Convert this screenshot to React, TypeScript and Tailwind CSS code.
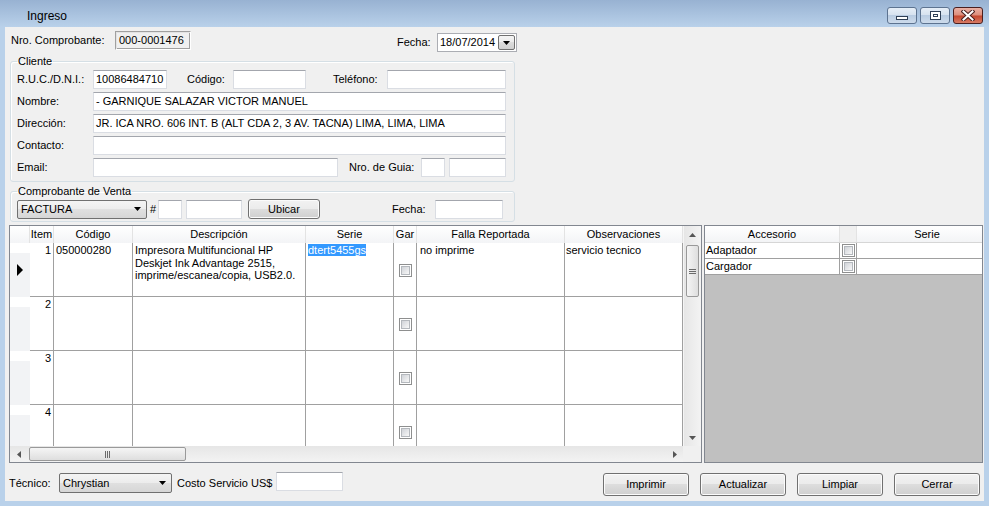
import React from "react";

const F = "font-['Liberation_Sans',Arial,sans-serif] text-[11px] leading-[13px] text-black";

function TextBox({ className = "", children }: { className?: string; children?: React.ReactNode }) {
  return (
    <div
      className={`h-[19px] shrink-0 bg-white border border-[#dadde3] border-t-[#a3a6ad] flex items-center px-[2px] overflow-hidden whitespace-nowrap ${className}`}
    >
      {children}
    </div>
  );
}

function Label({ className = "", children }: { className?: string; children?: React.ReactNode }) {
  return <div className={`shrink-0 whitespace-nowrap flex items-center ${className}`}>{children}</div>;
}

function Arrow({ dir = "down", color = "#000" }: { dir?: "down" | "up" | "left" | "right"; color?: string }) {
  if (dir === "down")
    return (
      <svg width="7" height="4" viewBox="0 0 7 4">
        <path d="M0 0h7L3.5 4z" fill={color} />
      </svg>
    );
  if (dir === "up")
    return (
      <svg width="7" height="4" viewBox="0 0 7 4">
        <path d="M0 4h7L3.5 0z" fill={color} />
      </svg>
    );
  if (dir === "left")
    return (
      <svg width="4" height="7" viewBox="0 0 4 7">
        <path d="M4 0v7L0 3.5z" fill={color} />
      </svg>
    );
  return (
    <svg width="4" height="7" viewBox="0 0 4 7">
      <path d="M0 0v7L4 3.5z" fill={color} />
    </svg>
  );
}

function Combo({ className = "", text }: { className?: string; text: string }) {
  return (
    <div
      className={`h-[19px] shrink-0 rounded-[2px] border border-[#707070] bg-[linear-gradient(#f4f4f4_0%,#ececec_50%,#e0e0e0_50%,#d6d6d6_100%)] flex items-center pl-[3px] pr-[5px] ${className}`}
    >
      <span className="flex-1 whitespace-nowrap">{text}</span>
      <Arrow />
    </div>
  );
}

function Btn({ className = "", children }: { className?: string; children?: React.ReactNode }) {
  return (
    <div
      className={`shrink-0 rounded-[3px] border border-[#707070] bg-[linear-gradient(#f2f2f2_0%,#ebebeb_50%,#dddddd_50%,#cfcfcf_100%)] shadow-[inset_0_0_0_1px_#fbfbfb] flex items-center justify-center ${className}`}
    >
      {children}
    </div>
  );
}

function Check() {
  return (
    <div className="w-[13px] h-[13px] border border-[#8e8f8f] bg-white p-[1px]">
      <div className="w-full h-full border border-[#b4b8bd] bg-gradient-to-br from-[#d0d3d8] to-[#f8f8f8]" />
    </div>
  );
}

function TitleBar() {
  return (
    <div className="h-[27px] shrink-0 bg-gradient-to-b from-[#98b2d2] to-[#b9d1ea] flex items-start">
      <div className="ml-[27px] mt-[9px] text-[12px] leading-[14px]">Ingreso</div>
      <div className="ml-auto mr-[6px] mt-[7px] flex gap-[3px]">
        <div className="w-[30px] h-[17px] rounded-[3px] border border-[#5d7390] bg-[linear-gradient(#e6eef7_0%,#d5e1ee_50%,#b9cce2_50%,#cddbeb_100%)] flex items-end justify-center pb-[3px]">
          <div className="w-[12px] h-[4px] border border-[#2f3f55] bg-white" />
        </div>
        <div className="w-[30px] h-[17px] rounded-[3px] border border-[#5d7390] bg-[linear-gradient(#e6eef7_0%,#d5e1ee_50%,#b9cce2_50%,#cddbeb_100%)] flex items-center justify-center">
          <div className="w-[11px] h-[9px] border border-[#2f3f55] bg-white p-[2px]">
            <div className="w-full h-full border border-[#2f3f55]" />
          </div>
        </div>
        <div className="w-[30px] h-[17px] rounded-[3px] border border-[#4a1e1e] bg-[linear-gradient(#eab0a4_0%,#dc8d7c_48%,#c4452d_52%,#d77a63_100%)] flex items-center justify-center">
          <svg width="14" height="11" viewBox="0 0 14 11">
            <path d="M2.5 1.5L11.5 9.5M11.5 1.5L2.5 9.5" stroke="#4a2020" strokeWidth="4" strokeLinecap="square" />
            <path d="M2.5 1.5L11.5 9.5M11.5 1.5L2.5 9.5" stroke="#ffffff" strokeWidth="2" strokeLinecap="square" />
          </svg>
        </div>
      </div>
    </div>
  );
}

function Grip({ vertical }: { vertical?: boolean }) {
  if (vertical)
    return (
      <svg width="7" height="7" viewBox="0 0 7 7">
        <path d="M0 1.5h7M0 3.5h7M0 5.5h7" stroke="#6b6b6b" strokeWidth="1" />
      </svg>
    );
  return (
    <svg width="7" height="7" viewBox="0 0 7 7">
      <path d="M1.5 0v7M3.5 0v7M5.5 0v7" stroke="#6b6b6b" strokeWidth="1" />
    </svg>
  );
}

function VScroll() {
  return (
    <div className="w-[18px] shrink-0 bg-[linear-gradient(90deg,#e6e6e6,#f3f3f3)] flex flex-col border-l border-[#f5f5f5]">
      <div className="h-[17px] flex items-center justify-center shrink-0">
        <Arrow dir="up" color="#555" />
      </div>
      <div className="mt-[2px] ml-[2px] w-[13px] h-[52px] rounded-[2px] border border-[#999] bg-[linear-gradient(90deg,#f5f5f5,#dedede)] flex items-center justify-center shrink-0">
        <Grip vertical />
      </div>
      <div className="flex-1" />
      <div className="h-[17px] flex items-center justify-center shrink-0">
        <Arrow dir="down" color="#555" />
      </div>
    </div>
  );
}

function HScroll() {
  return (
    <div className="w-[673px] h-[16px] shrink-0 bg-[linear-gradient(#e6e6e6,#f3f3f3)] flex items-center">
      <div className="w-[17px] h-full flex items-center justify-center">
        <Arrow dir="left" color="#555" />
      </div>
      <div className="ml-[2px] w-[157px] h-[14px] rounded-[2px] border border-[#999] bg-[linear-gradient(#f5f5f5,#dedede)] flex items-center justify-center">
        <Grip />
      </div>
      <div className="flex-1" />
      <div className="w-[17px] h-full flex items-center justify-center">
        <Arrow dir="right" color="#555" />
      </div>
    </div>
  );
}

const cols = [
  { w: "w-[24px]", t: "Item" },
  { w: "w-[79px]", t: "Código" },
  { w: "w-[173px]", t: "Descripción" },
  { w: "w-[88px]", t: "Serie" },
  { w: "w-[23px]", t: "Gar" },
  { w: "w-[148px]", t: "Falla Reportada" },
  { w: "w-[118px]", t: "Observaciones" },
];

type Row = {
  n: string;
  cod?: string;
  desc?: string[];
  serie?: string;
  falla?: string;
  obs?: string;
  cur?: boolean;
};

const rows: Row[] = [
  {
    n: "1",
    cod: "050000280",
    desc: ["Impresora Multifuncional HP", "Deskjet Ink Advantage 2515,", "imprime/escanea/copia, USB2.0."],
    serie: "dtert5455gs",
    falla: "no imprime",
    obs: "servicio tecnico",
    cur: true,
  },
  { n: "2" },
  { n: "3" },
  { n: "4" },
];

const cell = "shrink-0 border-r border-b border-[#a0a0a0] overflow-hidden whitespace-nowrap pt-[1px]";

function MainGrid() {
  return (
    <div className="w-[693px] h-[238px] shrink-0 border border-[#828790] bg-white flex flex-col">
      <div className="flex flex-1 min-h-0">
        <div className="w-[673px] flex flex-col">
          <div className="h-[17px] shrink-0 flex bg-gradient-to-b from-white to-[#f3f4f6]">
            <div className="w-[20px] shrink-0 border-r border-[#e3e3e3]" />
            {cols.map((c) => (
              <div
                key={c.t}
                className={`${c.w} shrink-0 border-r border-[#e3e3e3] text-center leading-[17px] overflow-hidden whitespace-nowrap`}
              >
                {c.t}
              </div>
            ))}
          </div>
          <div className="flex-1 overflow-hidden">
            {rows.map((r) => (
              <div key={r.n} className="h-[54px] flex">
                <div className="w-[20px] shrink-0 flex items-center justify-center bg-[linear-gradient(#ffffff_0px,#ffffff_10px,#f2f3f5_10px,#f2f3f5_100%)]">
                  {r.cur && (
                    <svg width="6" height="12" viewBox="0 0 6 12">
                      <path d="M0 0L6 6L0 12z" fill="#000" />
                    </svg>
                  )}
                </div>
                <div className={`w-[24px] ${cell} text-right pr-[2px]`}>{r.n}</div>
                <div className={`w-[79px] ${cell} pl-[2px]`}>{r.cod}</div>
                <div className={`w-[173px] ${cell} pl-[2px] leading-[12.5px]`}>
                  {r.desc?.map((d) => (
                    <div key={d}>{d}</div>
                  ))}
                </div>
                <div className={`w-[88px] ${cell} pl-[2px]`}>
                  {r.serie && <span className="bg-[#3399ff] text-white">{r.serie}</span>}
                </div>
                <div className={`w-[23px] ${cell} flex items-center justify-center`}>
                  <Check />
                </div>
                <div className={`w-[148px] ${cell} pl-[3px]`}>{r.falla}</div>
                <div className={`w-[118px] ${cell} pl-[1px]`}>{r.obs}</div>
              </div>
            ))}
          </div>
        </div>
        <VScroll />
      </div>
      <div className="h-[16px] shrink-0 flex">
        <HScroll />
        <div className="flex-1 bg-[#f0f0f0]" />
      </div>
    </div>
  );
}

function AccGrid() {
  const acc = ["Adaptador", "Cargador"];
  return (
    <div className="w-[279px] h-[238px] shrink-0 border border-[#828790] bg-[#c0c0c0] overflow-hidden flex flex-col">
      <div className="h-[17px] shrink-0 flex bg-gradient-to-b from-white to-[#f3f4f6] border-b border-[#d6d6d6]">
        <div className="w-[135px] shrink-0 text-center leading-[16px] border-r border-[#e3e3e3]">Accesorio</div>
        <div className="w-[17px] shrink-0 border-r border-[#e3e3e3] bg-[#f0f0f0]" />
        <div className="w-[140px] shrink-0 text-center leading-[16px]">Serie</div>
      </div>
      {acc.map((a) => (
        <div key={a} className="h-[16px] shrink-0 flex bg-white border-b border-[#a0a0a0]">
          <div className="w-[135px] shrink-0 border-r border-[#a0a0a0] pl-[1px] leading-[15px]">{a}</div>
          <div className="w-[17px] shrink-0 border-r border-[#a0a0a0] flex items-center justify-center">
            <Check />
          </div>
          <div className="w-[140px] shrink-0" />
        </div>
      ))}
    </div>
  );
}

export default function App() {
  return (
    <div className={`w-[989px] h-[506px] bg-[#b9d1ea] flex flex-col overflow-hidden ${F}`}>
      <TitleBar />
      <div className="mx-[5px] h-[474px] bg-[#f0f0f0] flex flex-col">
        {/* Row 1 */}
        <div className="pt-[4px] h-[24px] flex items-start shrink-0">
          <Label className="ml-[6px] w-[104px] h-[19px]">Nro. Comprobante:</Label>
          <div className="w-[76px] h-[19px] border border-[#a0a0a0] border-b-white border-r-white shadow-[inset_1px_1px_0_#e3e3e3,inset_-1px_-1px_0_#a0a0a0] bg-[#f0f0f0] flex items-center pl-[3px] whitespace-nowrap">
            000-0001476
          </div>
          <Label className="ml-[206px] mt-[2px] w-[40px] h-[19px]">Fecha:</Label>
          <div className="mt-[2px] w-[80px] h-[19px] bg-white border border-[#abadb3] flex items-center pl-[2px]">
            <span className="flex-1 whitespace-nowrap">18/07/2014</span>
            <div className="w-[17px] h-[15px] mr-[1px] border border-[#707070] rounded-[2px] bg-[linear-gradient(#f4f4f4_0%,#ebebeb_50%,#dcdcdc_50%,#d0d0d0_100%)] flex items-center justify-center">
              <Arrow />
            </div>
          </div>
        </div>

        {/* Cliente */}
        <fieldset className="mt-[4px] ml-[5px] w-[505px] border border-[#d5dfe5] rounded-[3px] pl-[6px] pr-[8px] pt-[2px] pb-[4px] shadow-[inset_1px_1px_0_#ffffff] shrink-0">
          <legend className="px-[1px] leading-[13px]">Cliente</legend>
          <div className="flex flex-col gap-[3px]">
            <div className="h-[19px] flex items-center">
              <Label className="w-[76px]">R.U.C./D.N.I.:</Label>
              <TextBox className="w-[74px] border-[#8a8a8a]">10086484710</TextBox>
              <Label className="ml-[20px] w-[46px]">Código:</Label>
              <TextBox className="w-[73px]" />
              <Label className="ml-[27px] w-[54px]">Teléfono:</Label>
              <TextBox className="w-[119px]" />
            </div>
            <div className="h-[19px] flex items-center">
              <Label className="w-[76px]">Nombre:</Label>
              <TextBox className="w-[413px]">- GARNIQUE SALAZAR VICTOR MANUEL</TextBox>
            </div>
            <div className="h-[19px] flex items-center">
              <Label className="w-[76px]">Dirección:</Label>
              <TextBox className="w-[413px]">JR. ICA NRO. 606 INT. B (ALT CDA 2, 3 AV. TACNA) LIMA, LIMA, LIMA</TextBox>
            </div>
            <div className="h-[19px] flex items-center">
              <Label className="w-[76px]">Contacto:</Label>
              <TextBox className="w-[413px]" />
            </div>
            <div className="h-[19px] flex items-center">
              <Label className="w-[76px]">Email:</Label>
              <TextBox className="w-[245px]" />
              <Label className="ml-[11px] w-[72px]">Nro. de Guia:</Label>
              <TextBox className="w-[24px]" />
              <TextBox className="ml-[4px] w-[57px]" />
            </div>
          </div>
        </fieldset>

        {/* Comprobante de Venta */}
        <fieldset className="mt-[3px] ml-[5px] w-[505px] border border-[#d5dfe5] rounded-[3px] pl-[6px] pr-[8px] pt-[1px] pb-[2px] shadow-[inset_1px_1px_0_#ffffff] shrink-0">
          <legend className="px-[1px] leading-[13px]">Comprobante de Venta</legend>
          <div className="h-[20px] flex items-center">
            <Combo className="w-[130px]" text="FACTURA" />
            <Label className="ml-[3px] w-[8px]">#</Label>
            <TextBox className="w-[24px]" />
            <TextBox className="ml-[4px] w-[56px]" />
            <Btn className="ml-[6px] w-[72px] h-[20px]">Ubicar</Btn>
            <Label className="ml-[72px] w-[43px]">Fecha:</Label>
            <TextBox className="w-[68px]" />
          </div>
        </fieldset>

        {/* Grids */}
        <div className="mt-[3px] ml-[4px] flex gap-[2px] shrink-0">
          <MainGrid />
          <AccGrid />
        </div>

        {/* Bottom */}
        <div className="mt-[10px] ml-[4px] mr-[4px] h-[23px] flex items-start shrink-0">
          <Label className="w-[50px] h-[20px]">Técnico:</Label>
          <Combo className="w-[113px] h-[20px]" text="Chrystian" />
          <Label className="ml-[5px] w-[99px] h-[20px]">Costo Servicio US$</Label>
          <TextBox className="w-[67px] -mt-[1px]" />
          <div className="ml-auto flex gap-[11px]">
            <Btn className="w-[86px] h-[23px]">Imprimir</Btn>
            <Btn className="w-[86px] h-[23px]">Actualizar</Btn>
            <Btn className="w-[86px] h-[23px]">Limpiar</Btn>
            <Btn className="w-[86px] h-[23px]">Cerrar</Btn>
          </div>
        </div>
      </div>
    </div>
  );
}
